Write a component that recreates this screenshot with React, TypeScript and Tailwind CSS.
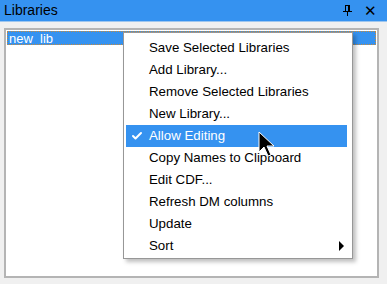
import { Check } from "lucide-react";

const items: { label: string; checked?: boolean; active?: boolean; submenu?: boolean }[] = [
  { label: "Save Selected Libraries" },
  { label: "Add Library..." },
  { label: "Remove Selected Libraries" },
  { label: "New Library..." },
  { label: "Allow Editing", checked: true, active: true },
  { label: "Copy Names to Clipboard" },
  { label: "Edit CDF..." },
  { label: "Refresh DM columns" },
  { label: "Update" },
  { label: "Sort", submenu: true },
];

const PinIcon = () => (
  <svg width="9" height="12" viewBox="0 0 9 12" className="text-black">
    <rect x="2" y="0" width="5" height="1" fill="currentColor" />
    <rect x="2" y="1" width="1" height="5" fill="currentColor" />
    <rect x="5" y="1" width="2" height="5" fill="currentColor" />
    <rect x="0" y="6" width="9" height="1" fill="currentColor" />
    <rect x="4" y="7" width="1" height="4" fill="currentColor" />
  </svg>
);

const Cursor = () => (
  <svg width="18" height="28" viewBox="0 0 18 28">
    <path d="M1 1 L1 21 L6 16 L10 25 L13 24 L9 15 L16 15 Z" fill="#000" stroke="#fff" strokeWidth="1" />
  </svg>
);

export default function App() {
  return (
    <div className="relative w-[387px] h-[284px] bg-[#f0f0f0] overflow-hidden font-['Liberation_Sans',Arial,sans-serif] text-[13px] text-black">
      <div className="flex items-center h-[22px] bg-[#3592f0] border-b border-[#9ec6ee] pl-[4px] pr-[10px]">
        <span className="text-[14px] text-black">Libraries</span>
        <div className="ml-auto flex items-center gap-[12px]">
          <PinIcon />
          <span className="text-[15px] leading-none">✕</span>
        </div>
      </div>

      <div className="ml-[4px] mr-[8px] mt-[6px] h-[250px] border-2 border-[#b4b4b4] bg-white p-[1px]">
        <div className="h-[14px] bg-[#3592f0] border border-dotted border-[#c78a3c] flex items-center pl-[1px]">
          <span className="text-white leading-none">new_lib</span>
        </div>
      </div>

      <div className="absolute left-[123px] top-[32px] w-[230px] bg-white border border-[#979797] pt-[4px] pb-[1px] shadow-[3px_3px_4px_rgba(0,0,0,0.25)]">
        {items.map((it) => (
          <div
            key={it.label}
            className={`flex items-center h-[22px] ml-[2px] mr-[5px] ${it.active ? "bg-[#3592f0] text-white" : ""}`}
          >
            <div className="w-[22px] flex justify-center">
              {it.checked && <Check size={12} strokeWidth={4} />}
            </div>
            <span className="ml-[1px] text-[13.3px]">{it.label}</span>
            {it.submenu && (
              <span className="ml-auto mr-[3px] w-0 h-0 border-y-[5px] border-y-transparent border-l-[5px] border-l-black" />
            )}
          </div>
        ))}
      </div>

      <div className="absolute left-[258px] top-[131px]">
        <Cursor />
      </div>
    </div>
  );
}
